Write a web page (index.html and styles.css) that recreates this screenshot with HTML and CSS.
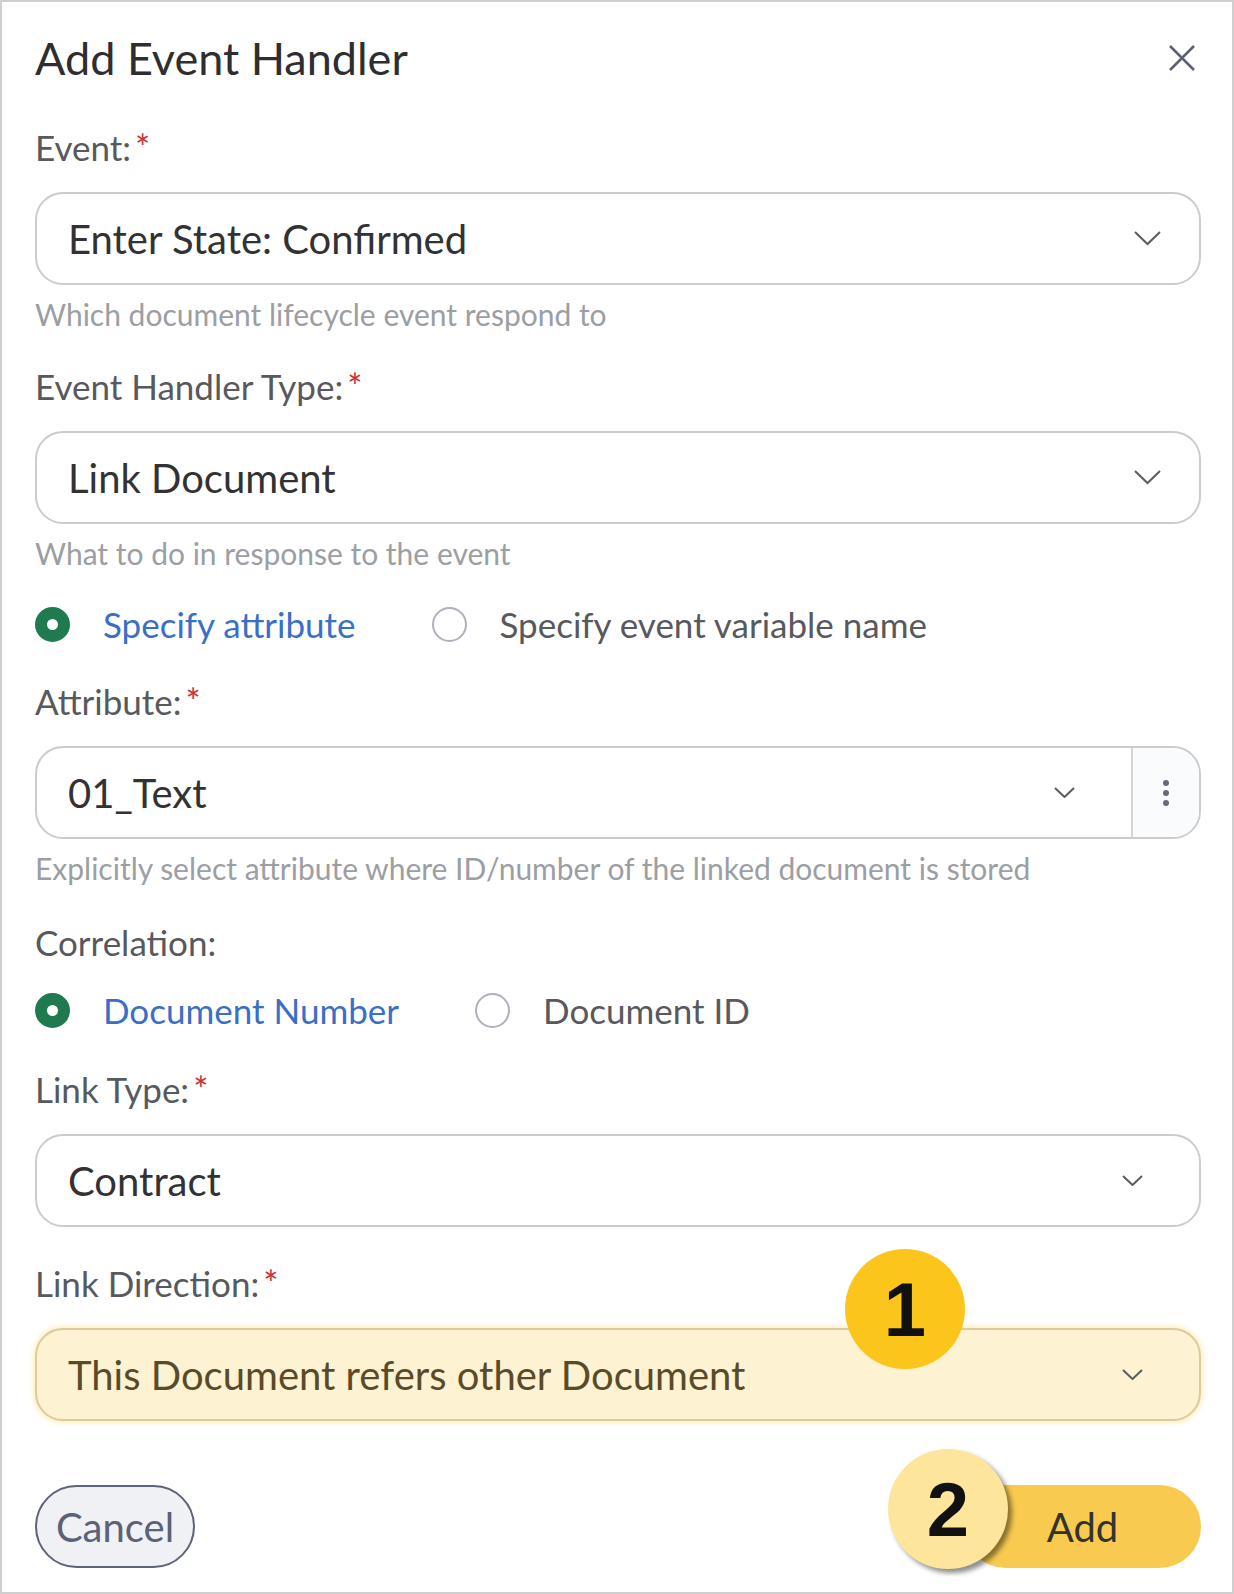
FILE: index.html
```html
<!DOCTYPE html>
<html lang="en">
<head>
 <meta charset="UTF-8">
 <title>Add Event Handler</title>
 <link rel="stylesheet" href="styles.css">
</head>
<body>
 <div class="dialog">
 <div class="dialog-header">
 <h1>Add Event Handler</h1>
 <svg class="close" width="26" height="26" viewBox="0 0 26 26"><path d="M1 1 L25 25 M25 1 L1 25" /></svg>
 </div>

 <div class="field first">
 <label>Event:<span class="req">*</span></label>
 <div class="select">
 <span>Enter State: Confirmed</span>
 <svg class="chevron" width="27" height="15" viewBox="0 0 27 15"><path d="M1 1 L13.5 13 L26 1" /></svg>
 </div>
 <div class="help">Which document lifecycle event respond to</div>
 </div>

 <div class="field">
 <label>Event Handler Type:<span class="req">*</span></label>
 <div class="select">
 <span>Link Document</span>
 <svg class="chevron" width="27" height="15" viewBox="0 0 27 15"><path d="M1 1 L13.5 13 L26 1" /></svg>
 </div>
 <div class="help">What to do in response to the event</div>
 </div>

 <div class="radios">
 <div class="radio checked"><span class="dot"></span>Specify attribute</div>
 <div class="radio"><span class="dot"></span>Specify event variable name</div>
 </div>

 <div class="field">
 <label>Attribute:<span class="req">*</span></label>
 <div class="select with-menu">
 <span>01_Text</span>
 <svg class="chevron small" width="21" height="11" viewBox="0 0 21 11"><path d="M1 1 L10.5 10 L20 1" /></svg>
 <div class="menu-btn"><i></i><i></i><i></i></div>
 </div>
 <div class="help">Explicitly select attribute where ID/number of the linked document is stored</div>
 </div>

 <div class="field correlation">
 <label>Correlation:</label>
 </div>
 <div class="radios tight">
 <div class="radio checked"><span class="dot"></span>Document Number</div>
 <div class="radio"><span class="dot"></span>Document ID</div>
 </div>

 <div class="field link-type">
 <label>Link Type:<span class="req">*</span></label>
 <div class="select">
 <span>Contract</span>
 <svg class="chevron small" width="21" height="11" viewBox="0 0 21 11"><path d="M1 1 L10.5 10 L20 1" /></svg>
 </div>
 </div>

 <div class="field direction">
 <label>Link Direction:<span class="req">*</span></label>
 <div class="select highlight">
 <span>This Document refers other Document</span>
 <svg class="chevron small" width="21" height="11" viewBox="0 0 21 11"><path d="M1 1 L10.5 10 L20 1" /></svg>
 </div>
 <div class="step step-1">1</div>
 </div>

 <div class="dialog-footer">
 <button class="btn-cancel">Cancel</button>
 <div class="add-wrap">
 <button class="btn-add">Add</button>
 <div class="step step-2">2</div>
 </div>
 </div>
 </div>
</body>
</html>
```

FILE: styles.css
```css
body {
margin: 0;
background: #fff;
font-family: Lato, "Open Sans", sans-serif;
}
.dialog {
width: 1234px;
height: 1594px;
box-sizing: border-box;
border: 2px solid #cfcfcf;
padding: 0 31px 0 33px;
}
.dialog-header {
display: flex;
justify-content: space-between;
align-items: center;
height: 60px;
margin-top: 26px;
}
.dialog-header h1 {
margin: 0;
font-size: 45px;
font-weight: 400;
color: #2e2e30;
}
.close {
margin-right: 6px;
}
.close path {
stroke: #5b6072;
stroke-width: 2.5;
fill: none;
}
.field {
position: relative;
margin-top: 32px;
}
.field.first {
margin-top: 39px;
}
.field label {
display: block;
height: 40px;
line-height: 40px;
font-size: 35px;
color: #57595c;
}
.req {
color: #c9343a;
font-size: 36px;
margin-left: 4px;
}
.select {
display: flex;
align-items: center;
height: 93px;
margin-top: 25px;
box-sizing: border-box;
border: 2px solid #cccccc;
border-radius: 28px;
padding: 0 38px 0 31px;
font-size: 40px;
color: #323234;
}
.select span {
flex: 1;
}
.chevron path {
stroke: #5a5c60;
stroke-width: 2;
fill: none;
}
.chevron.small {
margin-right: 18px;
}
.select.with-menu {
padding-right: 0;
}
.select.with-menu .chevron {
margin-right: 56px;
}
.menu-btn {
width: 66px;
height: 100%;
border-left: 2px solid #d6d6d6;
border-radius: 0 26px 26px 0;
background: #fafbfc;
display: flex;
flex-direction: column;
align-items: center;
justify-content: center;
gap: 4px;
}
.menu-btn i {
width: 6px;
height: 6px;
border-radius: 50%;
background: #666a7a;
}
.help {
margin-top: 9px;
height: 40px;
line-height: 40px;
font-size: 30px;
color: #9b9ea3;
}
.radios {
display: flex;
align-items: center;
height: 50px;
margin-top: 26px;
gap: 76px;
}
.radios.tight {
margin-top: 23px;
}
.radio {
display: flex;
align-items: center;
gap: 33px;
font-size: 35px;
color: #58595d;
}
.radio .dot {
width: 35px;
height: 35px;
box-sizing: border-box;
border: 2px solid #aeb0bb;
border-radius: 50%;
}
.radio.checked {
color: #3a6fc7;
}
.radio.checked .dot {
border: 12px solid #1f7a50;
background: #fff;
}
.field.correlation {
margin-top: 34px;
}
.field.link-type {
margin-top: 34px;
}
.field.direction {
margin-top: 36px;
}
.select.highlight {
background: #fdf2d1;
border-color: #dccb9c;
color: #5a4b28;
box-shadow: 0 0 5px 2px rgba(252, 226, 150, 0.6);
}
.step {
position: absolute;
width: 120px;
height: 120px;
border-radius: 50%;
display: flex;
align-items: center;
justify-content: center;
font-family: "Liberation Sans", Arial, sans-serif;
font-weight: 700;
font-size: 76px;
color: #111;
}
.step-1 {
left: 810px;
top: -14px;
background: #fcc51c;
}
.dialog-footer {
display: flex;
justify-content: space-between;
align-items: center;
margin-top: 64px;
}
.btn-cancel {
width: 160px;
height: 83px;
border: 2px solid #5e6478;
border-radius: 42px;
background: #eff1f4;
font-family: inherit;
font-size: 40px;
color: #5b6176;
padding: 0;
}
.add-wrap {
position: relative;
}
.btn-add {
width: 237px;
height: 83px;
border: none;
border-radius: 42px;
background: #f8ca50;
font-family: inherit;
font-size: 40px;
color: #343230;
padding: 0;
}
.step-2 {
left: -76px;
top: -36px;
background: #fde59c;
box-shadow: 4px 4px 5px rgba(0, 0, 0, 0.45);
}
```
